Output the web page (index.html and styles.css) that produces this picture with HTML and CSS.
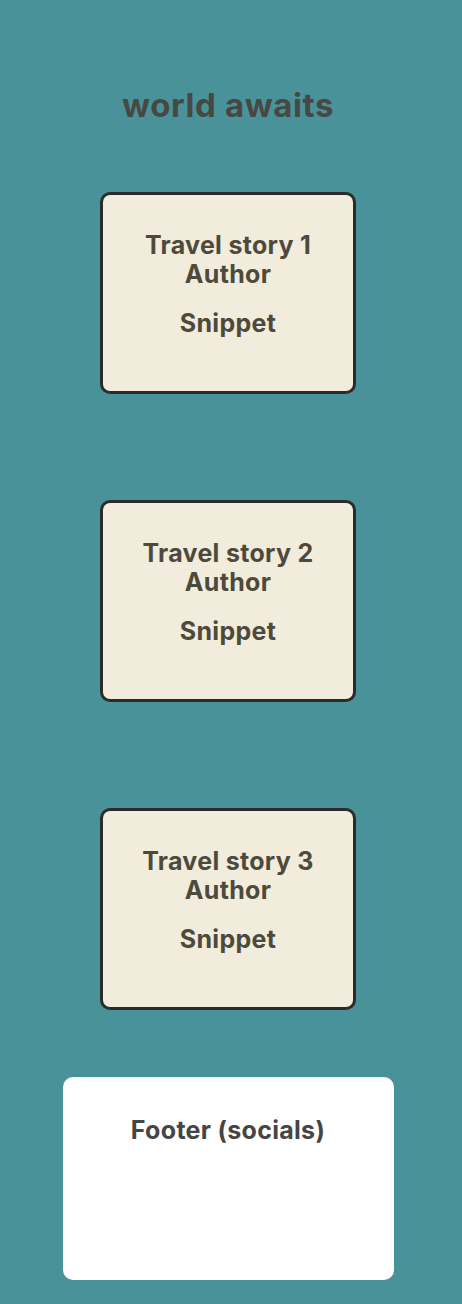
FILE: index.html
```html
<!DOCTYPE html>
<html lang="en">
<head>
<meta charset="utf-8">
<title>world awaits</title>
<link rel="stylesheet" href="styles.css">
</head>
<body>
<main class="page">
  <h1 class="hero-title">world awaits</h1>
  <section class="stories">
    <article class="story-card">
      <h2 class="story-title">Travel story 1<br>Author</h2>
      <p class="story-snippet">Snippet</p>
    </article>
    <article class="story-card">
      <h2 class="story-title">Travel story 2<br>Author</h2>
      <p class="story-snippet">Snippet</p>
    </article>
    <article class="story-card">
      <h2 class="story-title">Travel story 3<br>Author</h2>
      <p class="story-snippet">Snippet</p>
    </article>
  </section>
  <footer class="site-footer">
    <p class="footer-title">Footer (socials)</p>
  </footer>
</main>
</body>
</html>
```

FILE: styles.css
```css
html, body {
  margin: 0;
  padding: 0;
}
body {
  background: #4a929a;
  font-family: Inter, "Noto Sans", sans-serif;
  min-height: 1304px;
}
.page {
  display: flex;
  flex-direction: column;
  align-items: center;
  padding: 85px 6px 25px 0;
}
.hero-title {
  margin: 0;
  font-size: 33px;
  line-height: 40px;
  letter-spacing: 0.6px;
  font-weight: 700;
  color: #484843;
}
.stories {
  display: flex;
  flex-direction: column;
  gap: 106px;
  margin-top: 67px;
}
.story-card {
  box-sizing: border-box;
  width: 256px;
  height: 202px;
  border: 3px solid #2b2b2b;
  border-radius: 10px;
  background: #f1ecdb;
  text-align: center;
  padding-top: 36px;
  color: #4d4a3c;
}
.story-title {
  margin: 0;
  font-size: 25px;
  line-height: 29px;
  letter-spacing: 0.3px;
  font-weight: 700;
}
.story-snippet {
  margin: 20px 0 0;
  font-size: 25px;
  line-height: 29px;
  letter-spacing: 0.3px;
  font-weight: 700;
}
.site-footer {
  box-sizing: border-box;
  width: 331px;
  height: 203px;
  margin-top: 67px;
  background: #ffffff;
  border-radius: 10px;
  text-align: center;
  padding-top: 39px;
}
.footer-title {
  margin: 0;
  font-size: 25px;
  line-height: 29px;
  letter-spacing: 0.3px;
  font-weight: 700;
  color: #454545;
}
```
